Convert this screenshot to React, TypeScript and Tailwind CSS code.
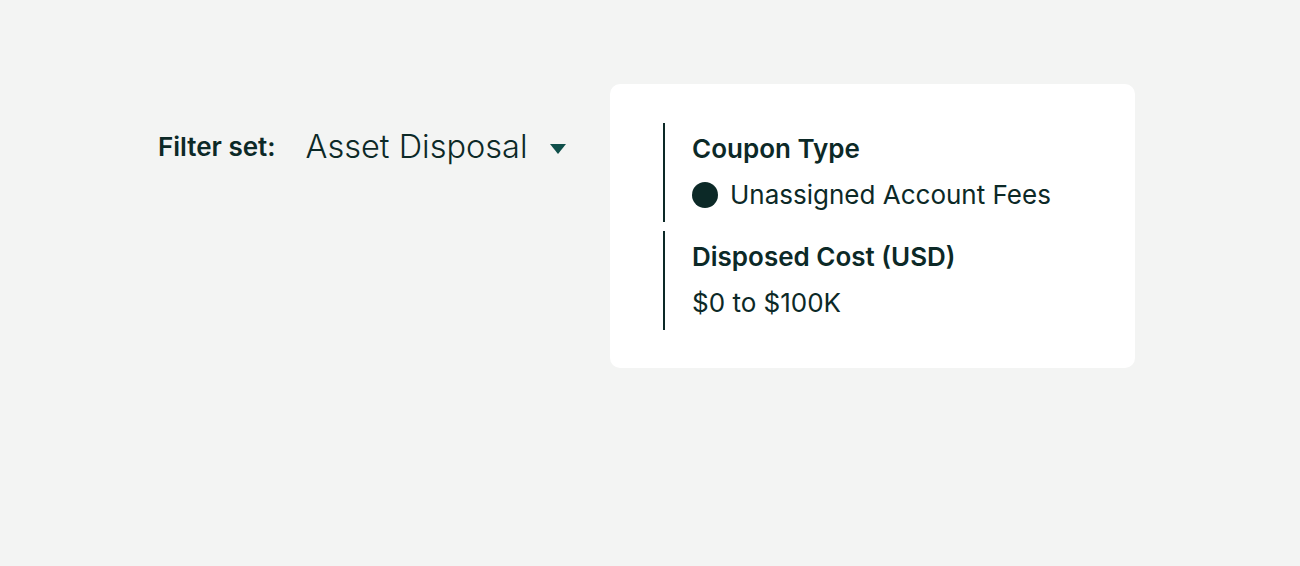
const filters = [
  { label: "Coupon Type", value: "Unassigned Account Fees", dot: true },
  { label: "Disposed Cost (USD)", value: "$0 to $100K", dot: false },
];

export default function App() {
  return (
    <div
      className="min-h-[566px] w-full bg-[#f3f4f3] text-[#0c2927]"
      style={{ fontFamily: "Inter, 'Liberation Sans', sans-serif" }}
    >
      <div className="flex items-start pl-[158px] pt-[84px]">
        {/* Filter set selector */}
        <div className="flex w-[452px] items-center pt-[47px]">
          <span className="text-[26px] font-semibold leading-[32px]">Filter set:</span>
          <button className="ml-[30px] flex items-center gap-[23px]">
            <span className="text-[32.5px] font-light leading-[32px]">Asset Disposal</span>
            <svg width="16" height="10" viewBox="0 0 16 10" className="mt-[3px]">
              <path d="M0 0h16L8 10z" fill="#0f4f4a" />
            </svg>
          </button>
        </div>

        {/* Filter card */}
        <div className="flex h-[284px] w-[525px] flex-col gap-[9px] rounded-[10px] bg-white px-[53px] pt-[39px]">
          {filters.map((f) => (
            <div
              key={f.label}
              className="flex flex-col gap-[14px] border-l-2 border-[#0c2927] pb-[11px] pl-[27px] pt-[10px]"
            >
              <div className="text-[26px] font-semibold leading-[32px]">{f.label}</div>
              <div className="flex items-center gap-[12px] text-[26px] leading-[32px]">
                {f.dot && <span className="h-[26px] w-[26px] rounded-full bg-[#0c2927]" />}
                <span>{f.value}</span>
              </div>
            </div>
          ))}
        </div>
      </div>
    </div>
  );
}
